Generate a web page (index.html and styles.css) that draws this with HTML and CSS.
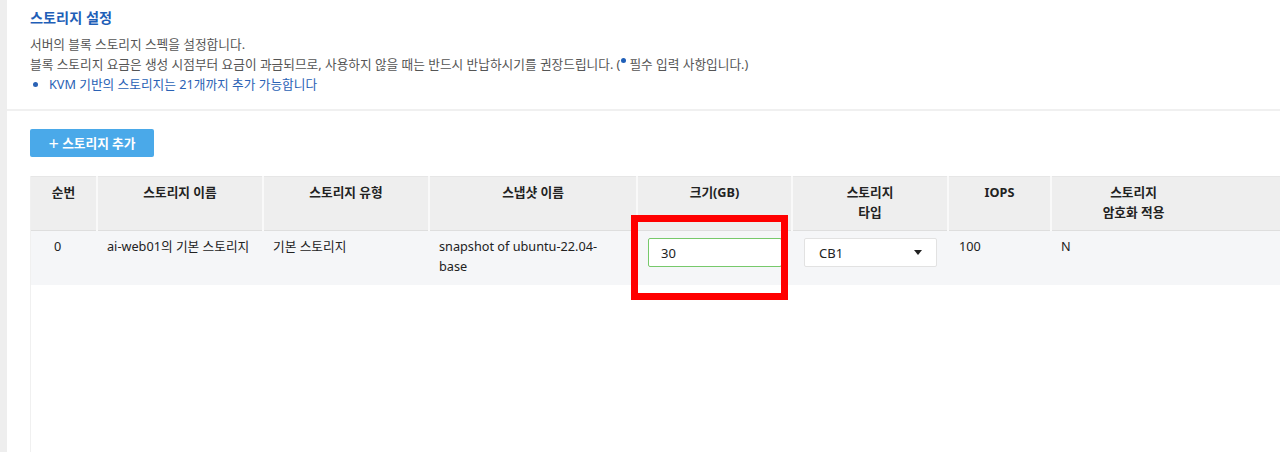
FILE: index.html
```html
<!DOCTYPE html>
<html lang="ko">
<head>
    <meta charset="UTF-8">
    <meta name="viewport" content="width=device-width, initial-scale=1.0">
    <title>스토리지 설정</title>
    <link rel="stylesheet" href="styles.css">
</head>
<body>
    <div class="panel">
        <!-- 안내 영역 -->
        <section class="intro">
            <h2 class="title">스토리지 설정</h2>
            <p class="desc">서버의 블록 스토리지 스펙을 설정합니다.</p>
            <p class="desc">블록 스토리지 요금은 생성 시점부터 요금이 과금되므로, 사용하지 않을 때는 반드시 반납하시기를 권장드립니다. (<span class="req-dot"></span>필수 입력 사항입니다.)</p>
            <ul class="notice">
                <li>KVM 기반의 스토리지는 21개까지 추가 가능합니다</li>
            </ul>
        </section>

        <!-- 스토리지 목록 -->
        <section class="content">
            <button class="add-btn"><span class="plus">+</span> 스토리지 추가</button>

            <div class="table-wrap">
                <table class="storage-table">
                    <colgroup>
                        <col class="c-no">
                        <col class="c-name">
                        <col class="c-kind">
                        <col class="c-snap">
                        <col class="c-size">
                        <col class="c-type">
                        <col class="c-iops">
                        <col class="c-enc">
                        <col>
                    </colgroup>
                    <thead>
                        <tr>
                            <th>순번</th>
                            <th>스토리지 이름</th>
                            <th>스토리지 유형</th>
                            <th>스냅샷 이름</th>
                            <th>크기(GB)</th>
                            <th>스토리지<br>타입</th>
                            <th>IOPS</th>
                            <th>스토리지<br>암호화 적용</th>
                            <th class="filler"></th>
                        </tr>
                    </thead>
                    <tbody>
                        <tr>
                            <td class="no">0</td>
                            <td>ai-web01의 기본 스토리지</td>
                            <td>기본 스토리지</td>
                            <td class="snap">snapshot of ubuntu-22.04-base</td>
                            <td class="size-cell">
                                <input type="text" class="size-input" value="30">
                                <span class="highlight"></span>
                            </td>
                            <td>
                                <div class="select-box">CB1<span class="caret"></span></div>
                            </td>
                            <td class="pad-iops">100</td>
                            <td>N</td>
                            <td></td>
                        </tr>
                    </tbody>
                </table>
            </div>
        </section>
    </div>
</body>
</html>
```

FILE: styles.css
```css
body {
    margin: 0;
    padding: 0;
    background-color: #eeeeee;
    font-family: "Noto Sans", "Noto Sans CJK KR", sans-serif;
    font-size: 12.7px;
    color: #222;
}

.panel {
    margin-left: 7px;
    height: 452px;
    background-color: #fff;
    overflow: hidden;
}

/* 안내 영역 */
.intro {
    padding: 8px 0 15px 23px;
    border-bottom: 2px solid #f0f0f0;
}

.title {
    margin: 0 0 6px 0;
    font-size: 14.2px;
    font-weight: bold;
    line-height: 20px;
    color: #1f5fb8;
}

.desc {
    margin: 0;
    line-height: 20px;
    color: #555;
}

.req-dot {
    display: inline-block;
    width: 5px;
    height: 5px;
    margin: 0 3px 0 1px;
    border-radius: 50%;
    background-color: #1f5fb8;
    vertical-align: 6px;
}

.notice {
    margin: 0;
    padding: 0 0 0 19px;
    line-height: 20px;
    color: #2a62b5;
}

/* 스토리지 목록 */
.content {
    padding: 18px 0 0 23px;
}

.add-btn {
    display: block;
    width: 124px;
    height: 28px;
    padding: 0;
    border: none;
    border-radius: 2px;
    background-color: #4aa9e9;
    color: #fff;
    font-family: inherit;
    font-size: 12.7px;
    font-weight: bold;
    cursor: pointer;
}

.add-btn .plus {
    font-size: 18px;
    font-weight: normal;
    vertical-align: -2px;
}

.table-wrap {
    margin-top: 19px;
    height: 300px;
    border-left: 1px solid #f0f0f0;
}

.storage-table {
    width: 1260px;
    border-collapse: collapse;
    table-layout: fixed;
}

.c-no { width: 66px; }
.c-name { width: 166px; }
.c-kind { width: 166px; }
.c-snap { width: 208px; }
.c-size { width: 155px; }
.c-type { width: 156px; }
.c-iops { width: 103px; }
.c-enc { width: 164px; }

.storage-table th {
    height: 54px;
    padding: 5px 4px 0 4px;
    background-color: #eeeeee;
    border-top: 1px solid #e6e6e6;
    border-left: 2px solid #f9f9f9;
    border-bottom: 1px solid #dedede;
    vertical-align: top;
    line-height: 20px;
    font-weight: bold;
    color: #222;
    box-sizing: border-box;
}

.storage-table th:first-child {
    border-left: none;
}

.storage-table th.filler {
    border-left: none;
}

.storage-table td {
    height: 54px;
    padding: 5px 10px 0 10px;
    background-color: #f5f6f8;
    vertical-align: top;
    line-height: 20px;
    color: #222;
    box-sizing: border-box;
}

.storage-table td.no {
    padding-left: 23px;
}

.storage-table td.snap {
    padding-right: 30px;
}

.storage-table td.pad-iops {
    padding-left: 11px;
}

.size-cell {
    position: relative;
}

.size-input {
    display: block;
    width: 134px;
    height: 29px;
    margin: 2px 0 0 1px;
    padding: 0 12px;
    border: 1px solid #77c96b;
    border-radius: 2px;
    box-sizing: border-box;
    font-family: inherit;
    font-size: 13px;
    color: #222;
    outline: none;
}

/* 강조 표시 박스 */
.highlight {
    position: absolute;
    top: -16px;
    left: -6px;
    width: 143px;
    height: 71px;
    border: 7px solid #ff0000;
}

.select-box {
    display: flex;
    align-items: center;
    justify-content: space-between;
    width: 133px;
    height: 29px;
    margin: 2px 0 0 2px;
    padding: 0 14px 0 14px;
    border: 1px solid #e2e2e2;
    border-radius: 2px;
    background-color: #fff;
    box-sizing: border-box;
    font-size: 13px;
}

.caret {
    width: 0;
    height: 0;
    border-left: 4px solid transparent;
    border-right: 4px solid transparent;
    border-top: 5px solid #222;
}
```
